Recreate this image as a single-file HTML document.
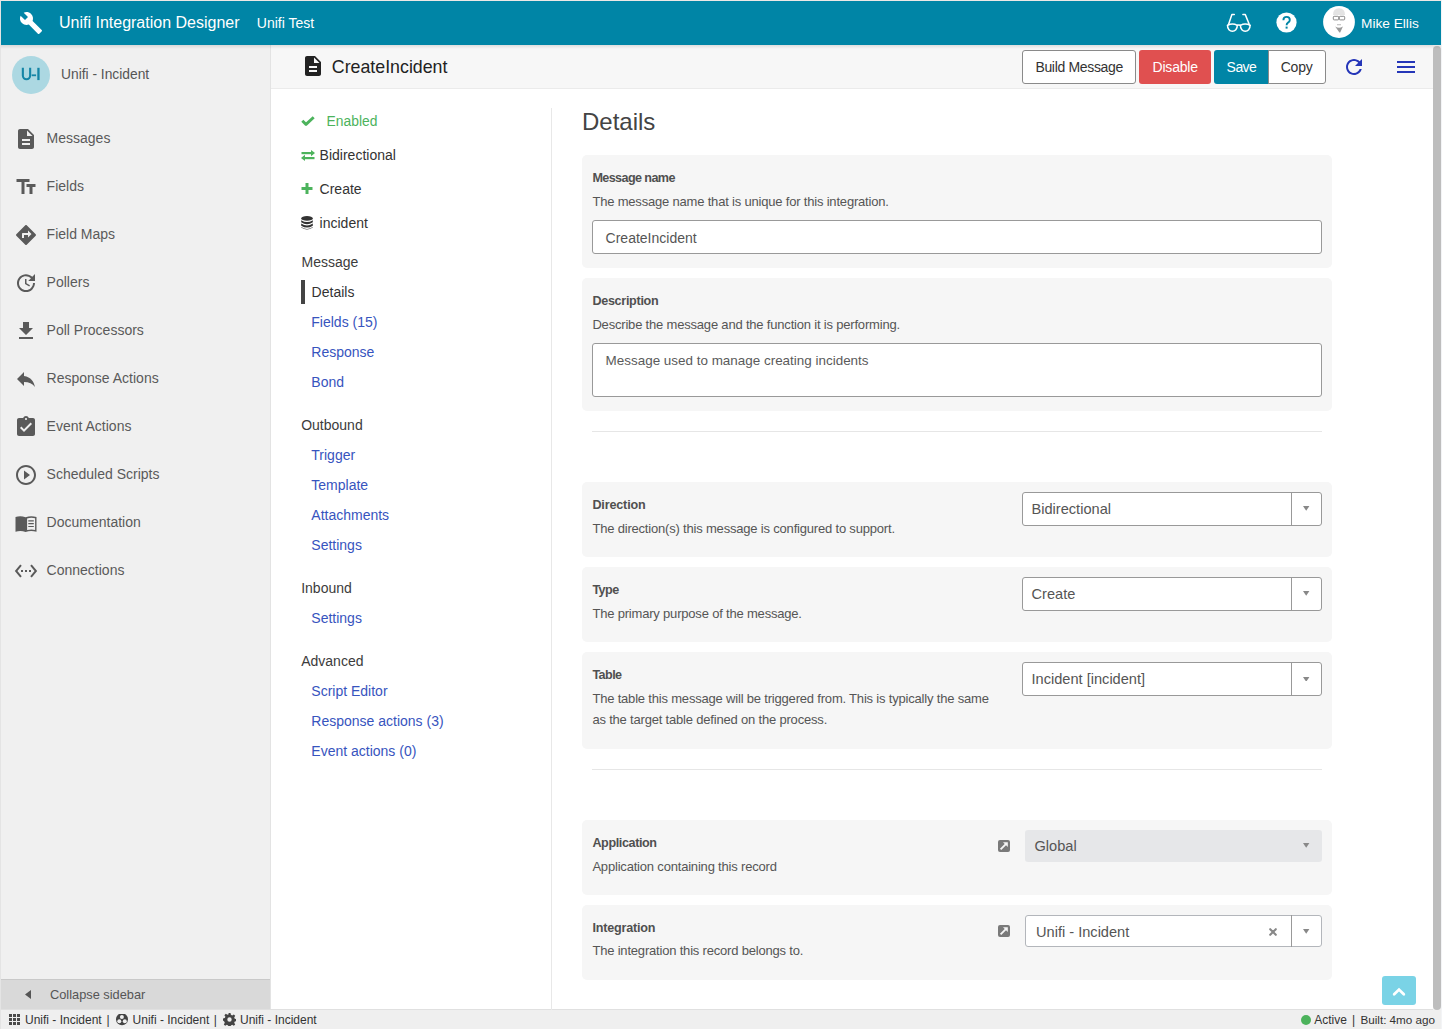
<!DOCTYPE html>
<html><head><meta charset="utf-8">
<style>
*{box-sizing:border-box;margin:0;padding:0}
html,body{width:1442px;height:1029px;overflow:hidden;background:#fff;font-family:"Liberation Sans",sans-serif}
body{position:relative}
.abs{position:absolute;display:block}
.t{position:absolute;white-space:nowrap;line-height:1}
</style></head><body>
<div class="abs" style="left:0px;top:0px;width:1442px;height:1029px;background:#fff"></div>
<div class="abs" style="left:0px;top:0px;width:1442px;height:1px;background:#ece8e6"></div>
<div class="abs" style="left:0px;top:0px;width:1px;height:1029px;background:#e4e4e4"></div>
<div class="abs" style="left:1441px;top:0px;width:1px;height:1029px;background:#f3f4f6"></div>
<div class="abs" style="left:1px;top:1px;width:1440px;height:44px;background:#0085a6"></div>
<svg class="abs" style="left:19px;top:11px;" width="24" height="24" viewBox="0 0 24 24"><path fill="#fff" d="M22.7 19l-9.1-9.1c.9-2.3.4-5-1.5-6.9-2-2-5-2.4-7.4-1.3L9 6 6 9 1.6 4.7C.4 7.1.9 10.1 2.9 12.1c1.9 1.9 4.6 2.4 6.9 1.5l9.1 9.1c.4.4 1 .4 1.4 0l2.3-2.3c.5-.4.5-1.1.1-1.4z"/></svg>
<div class="t" style="left:59.00px;top:15.16px;font-size:16px;color:#fff;font-weight:normal;">Unifi Integration Designer</div>
<div class="t" style="left:256.80px;top:16.05px;font-size:14px;color:#fff;font-weight:normal;">Unifi Test</div>
<svg class="abs" style="left:1222px;top:10px;" width="34" height="26" viewBox="0 0 34 26"><g fill="none" stroke="#fff" stroke-width="1.5" stroke-linecap="round" stroke-linejoin="round"><path d="M12.3 4.6 H9.9 L6.6 14.2"/><path d="M20.9 4.6 H23.3 L27.2 14.2"/><path d="M5.6 15.3 Q10.4 12.6 15.3 15.3 Q16.8 14.6 18.4 15.3 Q23.2 12.6 28.1 15.3"/><path d="M5.5 15.3 C5.3 23.2 15.5 23.2 15.3 15.3"/><path d="M18.4 15.3 C18.2 23.2 28.3 23.2 28.1 15.3"/></g></svg>
<svg class="abs" style="left:1276px;top:12px;" width="21" height="21" viewBox="0 0 21 21"><circle cx="10.5" cy="10.5" r="10.1" fill="#fff"/><path d="M7.4 8.2 Q7.4 4.9 10.6 4.9 Q13.8 4.9 13.8 7.9 Q13.8 9.6 12 10.6 Q10.6 11.4 10.6 13.2" fill="none" stroke="#0085a6" stroke-width="1.9"/><rect x="9.6" y="14.6" width="2" height="2" fill="#0085a6"/></svg>
<svg class="abs" style="left:1323px;top:6px;" width="32" height="32" viewBox="0 0 32 32"><defs><filter id="bl" x="-20%" y="-20%" width="140%" height="140%"><feGaussianBlur stdDeviation="0.45"/></filter></defs><circle cx="16" cy="16" r="15.9" fill="#fff"/><g filter="url(#bl)"><path d="M10 9 Q10 2.2 16 2.2 Q22 2.2 22 9 Z" fill="#e3e3e3"/><rect x="10.3" y="10.3" width="5.4" height="3.6" rx="0.8" fill="none" stroke="#8a8a8a" stroke-width="1"/><rect x="16.3" y="10.3" width="5.4" height="3.6" rx="0.8" fill="none" stroke="#8a8a8a" stroke-width="1"/><rect x="14" y="18" width="4" height="1.3" fill="#c8c8c8"/><path d="M12.2 20.6 Q16 23 19.9 20.6 L17.2 26.5 L16.4 26.5Z" fill="#9a9a9a"/></g></svg>
<div class="t" style="left:1361.00px;top:17.10px;font-size:13.7px;color:#fff;font-weight:normal;">Mike Ellis</div>
<div class="abs" style="left:1px;top:45px;width:1440px;height:4px;background:linear-gradient(rgba(0,0,0,.10),rgba(0,0,0,0));z-index:5"></div>
<div class="abs" style="left:1px;top:45px;width:269px;height:965px;background:#f0f0f0"></div>
<div class="abs" style="left:270px;top:45px;width:1px;height:965px;background:#e3e3e3"></div>
<svg class="abs" style="left:12px;top:56px;" width="38" height="38" viewBox="0 0 38 38"><circle cx="19" cy="19" r="19" fill="#acd8e2"/><path d="M10.85 11.8 V19.6 A3.65 3.65 0 0 0 18.15 19.6 V11.8" fill="none" stroke="#1485a6" stroke-width="2.1"/><rect x="19.7" y="18.4" width="4.4" height="1.8" fill="#1485a6"/><rect x="25.3" y="11.8" width="2.3" height="12.3" fill="#1485a6"/></svg>
<div class="t" style="left:61.00px;top:67.72px;font-size:13.8px;color:#555;font-weight:normal;">Unifi - Incident</div>
<svg class="abs" style="left:14px;top:127px;" width="24" height="24" viewBox="0 0 24 24"><path fill="#5a5a5a" fill-rule="evenodd" d="M14 2H6c-1.1 0-1.99.9-1.99 2L4 20c0 1.1.89 2 1.99 2H18c1.1 0 2-.9 2-2V8l-6-6zm2 16H8v-2h8v2zm0-4H8v-2h8v2zm-3-5V3.5L18.5 9H13z"/></svg>
<div class="t" style="left:46.60px;top:131.25px;font-size:14px;color:#5a5a5a;font-weight:normal;">Messages</div>
<svg class="abs" style="left:14px;top:175px;" width="24" height="24" viewBox="0 0 24 24"><path fill="#5a5a5a" fill-rule="evenodd" transform="translate(24.5 0) scale(-1 1)" d="M9 4v3h5v12h3V7h5V4H9zm-6 8h3v7h3v-7h3V9H3v3z"/></svg>
<div class="t" style="left:46.60px;top:179.25px;font-size:14px;color:#5a5a5a;font-weight:normal;">Fields</div>
<svg class="abs" style="left:14px;top:223px;" width="24" height="24" viewBox="0 0 24 24"><path fill="#5a5a5a" fill-rule="evenodd" d="M21.71 11.29l-9-9c-.39-.39-1.02-.39-1.41 0l-9 9c-.39.39-.39 1.02 0 1.41l9 9c.39.39 1.02.39 1.41 0l9-9c.39-.38.39-1.01 0-1.41zM14 14.5V12h-4v3H8v-4c0-.55.45-1 1-1h5V7.5l3.5 3.5-3.5 3.5z"/></svg>
<div class="t" style="left:46.60px;top:227.25px;font-size:14px;color:#5a5a5a;font-weight:normal;">Field Maps</div>
<svg class="abs" style="left:14px;top:271px;" width="24" height="24" viewBox="0 0 24 24"><path fill="#5a5a5a" fill-rule="evenodd" d="M21 10.12h-6.78l2.74-2.82c-2.73-2.7-7.15-2.8-9.88-.1-2.73 2.71-2.73 7.08 0 9.79s7.15 2.71 9.88 0C18.32 15.65 19 14.08 19 12.1h2c0 1.98-.88 4.55-2.64 6.29-3.51 3.48-9.21 3.48-12.72 0-3.5-3.47-3.53-9.11-.02-12.58s9.14-3.47 12.65 0L21 3v7.12zM12.5 8v4.25l3.5 2.08-.72 1.21L11 13V8h1.5z"/></svg>
<div class="t" style="left:46.60px;top:275.25px;font-size:14px;color:#5a5a5a;font-weight:normal;">Pollers</div>
<svg class="abs" style="left:14px;top:319px;" width="24" height="24" viewBox="0 0 24 24"><path fill="#5a5a5a" fill-rule="evenodd" d="M19 9h-4V3H9v6H5l7 7 7-7zM5 18v2h14v-2H5z"/></svg>
<div class="t" style="left:46.60px;top:323.25px;font-size:14px;color:#5a5a5a;font-weight:normal;">Poll Processors</div>
<svg class="abs" style="left:14px;top:367px;" width="24" height="24" viewBox="0 0 24 24"><path fill="#5a5a5a" fill-rule="evenodd" d="M10 9V5l-7 7 7 7v-4.1c5 0 8.5 1.6 11 5.1-1-5-4-10-11-11z"/></svg>
<div class="t" style="left:46.60px;top:371.25px;font-size:14px;color:#5a5a5a;font-weight:normal;">Response Actions</div>
<svg class="abs" style="left:14px;top:415px;" width="24" height="24" viewBox="0 0 24 24"><path fill="#5a5a5a" fill-rule="evenodd" d="M19 3h-4.18C14.4 1.84 13.3 1 12 1c-1.3 0-2.4.84-2.82 2H5c-1.1 0-2 .9-2 2v14c0 1.1.9 2 2 2h14c1.1 0 2-.9 2-2V5c0-1.1-.9-2-2-2zm-7 0c.55 0 1 .45 1 1s-.45 1-1 1-1-.45-1-1 .45-1 1-1zm-2 14l-4-4 1.41-1.41L10 14.17l6.59-6.59L18 9l-8 8z"/></svg>
<div class="t" style="left:46.60px;top:419.25px;font-size:14px;color:#5a5a5a;font-weight:normal;">Event Actions</div>
<svg class="abs" style="left:14px;top:463px;" width="24" height="24" viewBox="0 0 24 24"><path fill="#5a5a5a" fill-rule="evenodd" d="M10 16.5l6-4.5-6-4.5v9zM12 2C6.48 2 2 6.48 2 12s4.48 10 10 10 10-4.48 10-10S17.52 2 12 2zm0 18c-4.41 0-8-3.59-8-8s3.59-8 8-8 8 3.59 8 8-3.59 8-8 8z"/></svg>
<div class="t" style="left:46.60px;top:467.25px;font-size:14px;color:#5a5a5a;font-weight:normal;">Scheduled Scripts</div>
<svg class="abs" style="left:14px;top:511px;" width="24" height="24" viewBox="0 0 24 24"><path fill="#5a5a5a" fill-rule="evenodd" d="M1.5 6 Q6.5 4.3 11.6 6.2 Q17 4.3 22.5 6 V20.8 Q17 19.2 11.6 20.9 Q6.5 19.2 1.5 20.8Z M13.1 7.5 V19.1 Q17.2 17.9 21.1 18.9 V7.3 Q17.2 6.1 13.1 7.5Z M14.3 9.3h5.5v1.1h-5.5z M14.3 12.1h5.5v1.1h-5.5z M14.3 14.9h5.5v1.1h-5.5z"/></svg>
<div class="t" style="left:46.60px;top:515.25px;font-size:14px;color:#5a5a5a;font-weight:normal;">Documentation</div>
<svg class="abs" style="left:14px;top:559px;" width="24" height="24" viewBox="0 0 24 24"><path fill="#5a5a5a" fill-rule="evenodd" d="M7.77 6.76L6.23 5.48.82 12l5.41 6.52 1.54-1.28L3.42 12l4.35-5.24zM7 13h2v-2H7v2zm10-2h-2v2h2v-2zm-6 2h2v-2h-2v2zm6.77-7.52l-1.54 1.28L20.58 12l-4.35 5.24 1.54 1.28L23.18 12l-5.41-6.52z"/></svg>
<div class="t" style="left:46.60px;top:563.25px;font-size:14px;color:#5a5a5a;font-weight:normal;">Connections</div>
<div class="abs" style="left:1px;top:979px;width:269px;height:1px;background:#c9c9c9"></div>
<div class="abs" style="left:1px;top:980px;width:269px;height:30px;background:#d9d9d9"></div>
<svg class="abs" style="left:25px;top:990px;" width="6" height="9" viewBox="0 0 6 9"><path d="M6 0 V9 L0 4.5Z" fill="#555"/></svg>
<div class="t" style="left:50.00px;top:989.16px;font-size:12.8px;color:#555;font-weight:normal;">Collapse sidebar</div>
<div class="abs" style="left:1px;top:1009px;width:1440px;height:1px;background:#e0e0e0"></div>
<div class="abs" style="left:1px;top:1010px;width:1440px;height:19px;background:#efefef"></div>
<svg class="abs" style="left:9px;top:1014px;" width="11" height="11" viewBox="0 0 11 11"><rect x="0" y="0" width="3" height="3" fill="#4a4a4a"/><rect x="4" y="0" width="3" height="3" fill="#4a4a4a"/><rect x="8" y="0" width="3" height="3" fill="#4a4a4a"/><rect x="0" y="4" width="3" height="3" fill="#4a4a4a"/><rect x="4" y="4" width="3" height="3" fill="#4a4a4a"/><rect x="8" y="4" width="3" height="3" fill="#4a4a4a"/><rect x="0" y="8" width="3" height="3" fill="#4a4a4a"/><rect x="4" y="8" width="3" height="3" fill="#4a4a4a"/><rect x="8" y="8" width="3" height="3" fill="#4a4a4a"/></svg>
<div class="t" style="left:25.00px;top:1014.34px;font-size:12px;color:#333;font-weight:normal;">Unifi - Incident</div>
<div class="t" style="left:106.50px;top:1014.34px;font-size:12px;color:#333;font-weight:normal;">|</div>
<svg class="abs" style="left:116px;top:1014px;" width="12" height="12" viewBox="0 0 12 12"><circle cx="6" cy="5.2" r="6" fill="#444"/><circle cx="5.9" cy="2.9" r="2" fill="#efefef"/><circle cx="3.3" cy="7.2" r="2" fill="#efefef"/><circle cx="8.8" cy="7.2" r="2" fill="#efefef"/></svg>
<div class="t" style="left:132.60px;top:1014.34px;font-size:12px;color:#333;font-weight:normal;">Unifi - Incident</div>
<div class="t" style="left:213.80px;top:1014.34px;font-size:12px;color:#333;font-weight:normal;">|</div>
<svg class="abs" style="left:223px;top:1013px;" width="13" height="13" viewBox="0 0 13 13"><path fill="#444" d="M5.5 0h2l.4 1.8 1.3.6 1.6-1 1.4 1.4-1 1.6.6 1.3 1.8.4v2l-1.8.4-.6 1.3 1 1.6-1.4 1.4-1.6-1-1.3.6-.4 1.8h-2l-.4-1.8-1.3-.6-1.6 1-1.4-1.4 1-1.6-.6-1.3L0 7.5v-2l1.8-.4.6-1.3-1-1.6L2.8.8l1.6 1 1.3-.6z M6.5 4.3a2.2 2.2 0 1 0 0 4.4 2.2 2.2 0 1 0 0-4.4z" fill-rule="evenodd"/></svg>
<div class="t" style="left:240.00px;top:1014.34px;font-size:12px;color:#333;font-weight:normal;">Unifi - Incident</div>
<div class="abs" style="left:1301px;top:1015px;width:10px;height:10px;background:#4cb35c;border-radius:50%"></div>
<div class="t" style="left:1314.20px;top:1013.54px;font-size:12px;color:#333;font-weight:normal;">Active</div>
<div class="t" style="left:1352.00px;top:1013.54px;font-size:12px;color:#333;font-weight:normal;">|</div>
<div class="t" style="left:1360.40px;top:1013.80px;font-size:11.7px;color:#333;font-weight:normal;">Built: 4mo ago</div>
<div class="abs" style="left:271px;top:45px;width:1162px;height:43px;background:#f7f7f7"></div>
<div class="abs" style="left:271px;top:88px;width:1162px;height:1px;background:#ebebeb"></div>
<svg class="abs" style="left:300.5px;top:54px;" width="24" height="24" viewBox="0 0 24 24"><path fill="#222" d="M14 2H6c-1.1 0-1.99.9-1.99 2L4 20c0 1.1.89 2 1.99 2H18c1.1 0 2-.9 2-2V8l-6-6zm2 16H8v-2h8v2zm0-4H8v-2h8v2zm-3-5V3.5L18.5 9H13z"/></svg>
<div class="t" style="left:331.80px;top:58.73px;font-size:17.8px;color:#222;font-weight:normal;">CreateIncident</div>
<div class="abs" style="left:1022px;top:50px;width:114px;height:34px;background:#fff;border:1px solid #8a8a8a;border-radius:3px;box-sizing:border-box"></div>
<div class="t" style="left:1035.40px;top:60.05px;font-size:14px;color:#333;font-weight:normal;letter-spacing:-0.33px">Build Message</div>
<div class="abs" style="left:1139px;top:50px;width:72px;height:34px;background:#e05050;border-radius:3px"></div>
<div class="t" style="left:1152.60px;top:60.05px;font-size:14px;color:#fff;font-weight:normal;letter-spacing:-0.22px">Disable</div>
<div class="abs" style="left:1214px;top:50px;width:55px;height:34px;background:#0085a6;border-radius:3px 0 0 3px"></div>
<div class="t" style="left:1226.60px;top:60.05px;font-size:14px;color:#fff;font-weight:normal;letter-spacing:-0.55px">Save</div>
<div class="abs" style="left:1268px;top:50px;width:58px;height:34px;background:#fff;border:1px solid #8a8a8a;border-left:1px solid #8a8a8a;border-radius:0 3px 3px 0;box-sizing:border-box"></div>
<div class="t" style="left:1280.70px;top:60.05px;font-size:14px;color:#333;font-weight:normal;letter-spacing:-0.2px">Copy</div>
<svg class="abs" style="left:1341.6px;top:55px;" width="24" height="24" viewBox="0 0 24 24"><path fill="#2536b8" d="M17.65 6.35C16.2 4.9 14.21 4 12 4c-4.42 0-7.99 3.58-7.99 8s3.57 8 7.99 8c3.73 0 6.84-2.55 7.73-6h-2.08c-.82 2.33-3.04 4-5.65 4-3.31 0-6-2.69-6-6s2.69-6 6-6c1.66 0 3.14.69 4.22 1.78L13 11h7V4l-2.35 2.35z"/></svg>
<div class="abs" style="left:1397px;top:61px;width:18px;height:2px;background:#2536b8"></div>
<div class="abs" style="left:1397px;top:66px;width:18px;height:2px;background:#2536b8"></div>
<div class="abs" style="left:1397px;top:71px;width:18px;height:2px;background:#2536b8"></div>
<div class="abs" style="left:1433px;top:46px;width:8px;height:964px;background:#f1f1f1"></div>
<div class="abs" style="left:1433px;top:46px;width:8px;height:964px;background:#bdbdbd;border-radius:4px"></div>
<svg class="abs" style="left:301px;top:116px;" width="14" height="10" viewBox="0 0 14 10"><path d="M1.3 4.8 L5 8.4 L12.7 1.2" fill="none" stroke="#4cb35c" stroke-width="2.9" stroke-linejoin="round"/></svg>
<div class="t" style="left:326.60px;top:115.08px;font-size:13.85px;color:#4cb35c;font-weight:normal;">Enabled</div>
<svg class="abs" style="left:300.8px;top:150px;" width="14" height="11" viewBox="0 0 14 11"><g fill="#4cb35c"><rect x="0.5" y="2" width="10" height="2.2"/><path d="M10 0 L14 3.1 L10 6.2Z"/><rect x="3.5" y="7" width="10" height="2.2"/><path d="M4 4.8 L0 7.9 L4 11Z"/></g></svg>
<div class="t" style="left:319.60px;top:148.15px;font-size:14px;color:#333;font-weight:normal;">Bidirectional</div>
<svg class="abs" style="left:301px;top:183px;" width="12" height="11" viewBox="0 0 12 11"><g fill="#4cb35c"><rect x="4.5" y="0" width="3" height="11"/><rect x="0.5" y="4" width="11" height="3"/></g></svg>
<div class="t" style="left:319.60px;top:182.05px;font-size:14px;color:#333;font-weight:normal;">Create</div>
<svg class="abs" style="left:301px;top:216px;" width="12" height="14" viewBox="0 0 13 14" preserveAspectRatio="none"><g fill="#333"><ellipse cx="6.5" cy="2.4" rx="6.3" ry="2.3"/><path d="M0.2 4.2 Q6.5 8 12.8 4.2 V6.3 Q6.5 10.1 0.2 6.3Z"/><path d="M0.2 7.6 Q6.5 11.4 12.8 7.6 V9.7 Q6.5 13.5 0.2 9.7Z"/><path d="M0.2 11 Q6.5 14.8 12.8 11 V11.6 Q6.5 15.4 0.2 11.6Z"/></g></svg>
<div class="t" style="left:319.60px;top:215.75px;font-size:14px;color:#333;font-weight:normal;">incident</div>
<div class="t" style="left:301.50px;top:255.05px;font-size:14px;color:#3c3c3c;font-weight:normal;">Message</div>
<div class="abs" style="left:301px;top:280px;width:4px;height:24px;background:#444"></div>
<div class="t" style="left:311.60px;top:285.35px;font-size:14px;color:#333;font-weight:normal;">Details</div>
<div class="t" style="left:311.30px;top:315.25px;font-size:14px;color:#3754be;font-weight:normal;">Fields (15)</div>
<div class="t" style="left:311.30px;top:345.25px;font-size:14px;color:#3754be;font-weight:normal;">Response</div>
<div class="t" style="left:311.30px;top:375.25px;font-size:14px;color:#3754be;font-weight:normal;">Bond</div>
<div class="t" style="left:301.20px;top:418.15px;font-size:14px;color:#3c3c3c;font-weight:normal;">Outbound</div>
<div class="t" style="left:311.30px;top:448.15px;font-size:14px;color:#3754be;font-weight:normal;">Trigger</div>
<div class="t" style="left:311.30px;top:478.15px;font-size:14px;color:#3754be;font-weight:normal;">Template</div>
<div class="t" style="left:311.30px;top:508.15px;font-size:14px;color:#3754be;font-weight:normal;">Attachments</div>
<div class="t" style="left:311.30px;top:538.15px;font-size:14px;color:#3754be;font-weight:normal;">Settings</div>
<div class="t" style="left:301.20px;top:581.15px;font-size:14px;color:#3c3c3c;font-weight:normal;">Inbound</div>
<div class="t" style="left:311.30px;top:611.15px;font-size:14px;color:#3754be;font-weight:normal;">Settings</div>
<div class="t" style="left:301.20px;top:654.15px;font-size:14px;color:#3c3c3c;font-weight:normal;">Advanced</div>
<div class="t" style="left:311.30px;top:684.15px;font-size:14px;color:#3754be;font-weight:normal;">Script Editor</div>
<div class="t" style="left:311.30px;top:714.15px;font-size:14px;color:#3754be;font-weight:normal;">Response actions (3)</div>
<div class="t" style="left:311.30px;top:744.15px;font-size:14px;color:#3754be;font-weight:normal;">Event actions (0)</div>
<div class="abs" style="left:551px;top:108px;width:1px;height:902px;background:#e8e8e8"></div>
<div class="t" style="left:582.00px;top:109.98px;font-size:24px;color:#444;font-weight:normal;">Details</div>
<div class="abs" style="left:582px;top:155px;width:750px;height:113px;background:#f6f6f6;border-radius:5px"></div>
<div class="t" style="left:592.40px;top:172.13px;font-size:12.6px;color:#505050;font-weight:bold;letter-spacing:-0.6px">Message name</div>
<div class="t" style="left:592.40px;top:195.30px;font-size:13px;color:#555;font-weight:normal;letter-spacing:-0.19px">The message name that is unique for this integration.</div>
<div class="abs" style="left:592px;top:220px;width:730px;height:34px;background:#fff;border:1px solid #999;border-radius:3px;box-sizing:border-box"></div>
<div class="t" style="left:605.60px;top:231.15px;font-size:14px;color:#555;font-weight:normal;">CreateIncident</div>
<div class="abs" style="left:582px;top:278px;width:750px;height:133px;background:#f6f6f6;border-radius:5px"></div>
<div class="t" style="left:592.40px;top:294.73px;font-size:12.6px;color:#505050;font-weight:bold;letter-spacing:-0.3px">Description</div>
<div class="t" style="left:592.40px;top:317.50px;font-size:13px;color:#555;font-weight:normal;letter-spacing:-0.19px">Describe the message and the function it is performing.</div>
<div class="abs" style="left:592px;top:343px;width:730px;height:54px;background:#fff;border:1px solid #999;border-radius:3px;box-sizing:border-box"></div>
<div class="t" style="left:605.60px;top:353.92px;font-size:13.44px;color:#5a5a5a;font-weight:normal;">Message used to manage creating incidents</div>
<div class="abs" style="left:592px;top:431px;width:730px;height:1px;background:#e6e6e6"></div>
<div class="abs" style="left:582px;top:482px;width:750px;height:75px;background:#f6f6f6;border-radius:5px"></div>
<div class="t" style="left:592.40px;top:498.53px;font-size:12.6px;color:#505050;font-weight:bold;letter-spacing:-0.16px">Direction</div>
<div class="t" style="left:592.40px;top:521.50px;font-size:13px;color:#555;font-weight:normal;letter-spacing:-0.19px">The direction(s) this message is configured to support.</div>
<div class="abs" style="left:1022px;top:492px;width:300px;height:34px;background:#fff;border:1px solid #999;border-radius:3px;box-sizing:border-box"></div>
<div class="abs" style="left:1291px;top:492px;width:1px;height:34px;background:#999"></div>
<div class="t" style="left:1031.50px;top:501.94px;font-size:14.6px;color:#555;font-weight:normal;">Bidirectional</div>
<svg class="abs" style="left:1303.3px;top:506.09999999999997px;" width="6.4" height="4.8" viewBox="0 0 6.4 4.8"><path d="M0 0H6.4L3.2 4.8Z" fill="#888"/></svg>
<div class="abs" style="left:582px;top:567px;width:750px;height:75px;background:#f6f6f6;border-radius:5px"></div>
<div class="t" style="left:592.40px;top:584.13px;font-size:12.6px;color:#505050;font-weight:bold;letter-spacing:-0.56px">Type</div>
<div class="t" style="left:592.40px;top:606.50px;font-size:13px;color:#555;font-weight:normal;letter-spacing:-0.19px">The primary purpose of the message.</div>
<div class="abs" style="left:1022px;top:577px;width:300px;height:34px;background:#fff;border:1px solid #999;border-radius:3px;box-sizing:border-box"></div>
<div class="abs" style="left:1291px;top:577px;width:1px;height:34px;background:#999"></div>
<div class="t" style="left:1031.50px;top:586.94px;font-size:14.6px;color:#555;font-weight:normal;">Create</div>
<svg class="abs" style="left:1303.3px;top:591.0999999999999px;" width="6.4" height="4.8" viewBox="0 0 6.4 4.8"><path d="M0 0H6.4L3.2 4.8Z" fill="#888"/></svg>
<div class="abs" style="left:582px;top:652px;width:750px;height:97px;background:#f6f6f6;border-radius:5px"></div>
<div class="t" style="left:592.40px;top:668.93px;font-size:12.6px;color:#505050;font-weight:bold;letter-spacing:-0.57px">Table</div>
<div class="t" style="left:592.40px;top:691.80px;font-size:13px;color:#555;font-weight:normal;letter-spacing:-0.19px">The table this message will be triggered from. This is typically the same</div>
<div class="t" style="left:592.40px;top:713.30px;font-size:13px;color:#555;font-weight:normal;letter-spacing:-0.19px">as the target table defined on the process.</div>
<div class="abs" style="left:1022px;top:662px;width:300px;height:34px;background:#fff;border:1px solid #999;border-radius:3px;box-sizing:border-box"></div>
<div class="abs" style="left:1291px;top:662px;width:1px;height:34px;background:#999"></div>
<div class="t" style="left:1031.50px;top:672.44px;font-size:14.6px;color:#555;font-weight:normal;">Incident [incident]</div>
<svg class="abs" style="left:1303.3px;top:676.5999999999999px;" width="6.4" height="4.8" viewBox="0 0 6.4 4.8"><path d="M0 0H6.4L3.2 4.8Z" fill="#888"/></svg>
<div class="abs" style="left:592px;top:769px;width:730px;height:1px;background:#e6e6e6"></div>
<div class="abs" style="left:582px;top:820px;width:750px;height:75px;background:#f6f6f6;border-radius:5px"></div>
<div class="t" style="left:592.40px;top:836.53px;font-size:12.6px;color:#505050;font-weight:bold;letter-spacing:-0.39px">Application</div>
<div class="t" style="left:592.40px;top:860.30px;font-size:13px;color:#555;font-weight:normal;letter-spacing:-0.19px">Application containing this record</div>
<svg class="abs" style="left:998px;top:840px;" width="12" height="12" viewBox="0 0 12 12"><rect width="12" height="12" rx="2" fill="#7a7a7a"/><path d="M2.6 9.4 L8.6 3.4" fill="none" stroke="#f6f6f6" stroke-width="1.9"/><path d="M5 2.2 H9.8 V7Z" fill="#f6f6f6"/></svg>
<div class="abs" style="left:1025px;top:830px;width:297px;height:32px;background:#e6e7e9;border-radius:3px"></div>
<div class="t" style="left:1034.50px;top:838.84px;font-size:14.6px;color:#555;font-weight:normal;">Global</div>
<svg class="abs" style="left:1303.3px;top:843.0px;" width="6.4" height="4.8" viewBox="0 0 6.4 4.8"><path d="M0 0H6.4L3.2 4.8Z" fill="#888"/></svg>
<div class="abs" style="left:582px;top:905px;width:750px;height:75px;background:#f6f6f6;border-radius:5px"></div>
<div class="t" style="left:592.40px;top:922.03px;font-size:12.6px;color:#505050;font-weight:bold;letter-spacing:-0.19px">Integration</div>
<div class="t" style="left:592.40px;top:944.30px;font-size:13px;color:#555;font-weight:normal;letter-spacing:-0.19px">The integration this record belongs to.</div>
<svg class="abs" style="left:998px;top:925px;" width="12" height="12" viewBox="0 0 12 12"><rect width="12" height="12" rx="2" fill="#7a7a7a"/><path d="M2.6 9.4 L8.6 3.4" fill="none" stroke="#f6f6f6" stroke-width="1.9"/><path d="M5 2.2 H9.8 V7Z" fill="#f6f6f6"/></svg>
<div class="abs" style="left:1025px;top:915px;width:297px;height:32px;background:#fff;border:1px solid #b3b6bb;border-radius:3px;box-sizing:border-box"></div>
<div class="abs" style="left:1291px;top:915px;width:1px;height:32px;background:#999"></div>
<div class="t" style="left:1036.00px;top:924.94px;font-size:14.6px;color:#555;font-weight:normal;">Unifi - Incident</div>
<svg class="abs" style="left:1303.3px;top:929.0999999999999px;" width="6.4" height="4.8" viewBox="0 0 6.4 4.8"><path d="M0 0H6.4L3.2 4.8Z" fill="#888"/></svg>
<svg class="abs" style="left:1268.6px;top:927.6999999999999px;" width="8" height="8" viewBox="0 0 8 8"><path d="M1.2 1.2L6.8 6.8M6.8 1.2L1.2 6.8" stroke="#888" stroke-width="2.1" stroke-linecap="round"/></svg>
<div class="abs" style="left:1382px;top:976px;width:34px;height:29px;background:#7ad3e6;border-radius:3px"></div>
<svg class="abs" style="left:1392px;top:987px;" width="14" height="10" viewBox="0 0 14 10"><path d="M2.2 7.3 L7 2.6 L11.8 7.3" fill="none" stroke="#fff" stroke-width="2.8" stroke-linecap="round"/></svg>
</body></html>
